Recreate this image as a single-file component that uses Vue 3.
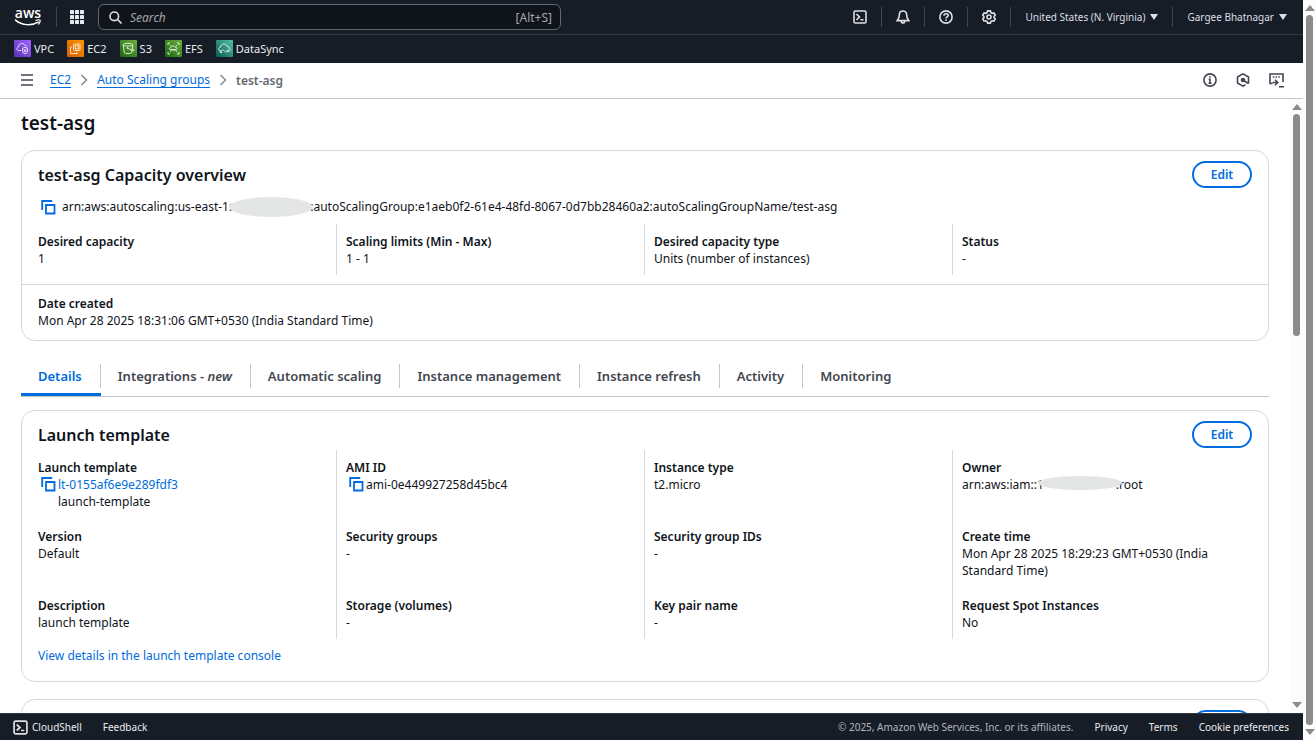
<script setup>
const services = [
  { name: 'VPC', kind: 'vpc' },
  { name: 'EC2', kind: 'ec2' },
  { name: 'S3', kind: 's3' },
  { name: 'EFS', kind: 'efs' },
  { name: 'DataSync', kind: 'sync' },
]
const capacity = [
  { label: 'Desired capacity', value: '1' },
  { label: 'Scaling limits (Min - Max)', value: '1 - 1' },
  { label: 'Desired capacity type', value: 'Units (number of instances)' },
  { label: 'Status', value: '-' },
]
const tabs = ['Details', 'Integrations - ', 'Automatic scaling', 'Instance management', 'Instance refresh', 'Activity', 'Monitoring']
const template = [
  [
    { label: 'Launch template', link: 'lt-0155af6e9e289fdf3', sub: 'launch-template' },
    { label: 'Version', value: 'Default' },
    { label: 'Description', value: 'launch template' },
  ],
  [
    { label: 'AMI ID', copy: 'ami-0e449927258d45bc4' },
    { label: 'Security groups', value: '-' },
    { label: 'Storage (volumes)', value: '-' },
  ],
  [
    { label: 'Instance type', value: 't2.micro' },
    { label: 'Security group IDs', value: '-' },
    { label: 'Key pair name', value: '-' },
  ],
  [
    { label: 'Owner', owner: true },
    { label: 'Create time', value: 'Mon Apr 28 2025 18:29:23 GMT+0530 (India Standard Time)' },
    { label: 'Request Spot Instances', value: 'No' },
  ],
]
</script>

<template>
  <div class="window">
    <div class="console">
      <header class="topbar">
        <a class="logo" href="#" aria-label="aws">
          <svg width="28" height="28" viewBox="0 0 28 28">
            <text x="14" y="15" text-anchor="middle" class="logo-text">aws</text>
            <path d="M1.5 17.1C8 22.7 18 22.9 24.2 19.1" fill="none" stroke="#fff" stroke-width="1.5" stroke-linecap="round" />
            <path d="M22 17.3c1.800-.5 3.600-.6 4-.1.4.6-.3 2.500-1.400 3.800" fill="none" stroke="#fff" stroke-width="1.200" stroke-linecap="round" />
          </svg>
        </a>
        <span class="rule"></span>
        <button class="icon-btn apps" aria-label="Services">
          <svg width="14" height="14" viewBox="0 0 14 14" fill="#e6e9ee">
            <template v-for="r in 3" :key="r">
              <rect v-for="c in 3" :key="c" :x="(c - 1) * 5" :y="(r - 1) * 5" width="4" height="4" rx="0.5" />
            </template>
          </svg>
        </button>
        <label class="search">
          <svg width="13" height="13" viewBox="0 0 13 13" fill="none" stroke="#dedee3" stroke-width="1.600">
            <circle cx="5.300" cy="5.300" r="4.300" /><path d="M8.500 8.500l4 4" />
          </svg>
          <input type="text" placeholder="Search" aria-label="Search" />
          <span>[Alt+S]</span>
        </label>
        <nav class="tools">
          <button class="icon-btn" aria-label="CloudShell">
            <svg class="line" width="14" height="14" viewBox="0 0 14 14"><rect x="1" y="1" width="12" height="12" rx="1.500" /><path d="M3.500 4.200l3 2.800-3 2.800M7.500 9.800h3" /></svg>
          </button>
          <span class="rule"></span>
          <button class="icon-btn" aria-label="Notifications">
            <svg class="line" width="14" height="14" viewBox="0 0 14 14"><path d="M7 1C4.800 1 3.400 2.500 3.400 4.500 3.400 7.500 2.900 8.500 1.300 10.600h11.400C11.100 8.500 10.600 7.500 10.600 4.500 10.600 2.500 9.200 1 7 1zM5.300 11c0 2.700 3.400 2.700 3.400 0" /></svg>
          </button>
          <span class="rule"></span>
          <button class="icon-btn" aria-label="Help">
            <svg class="line" width="14" height="14" viewBox="0 0 14 14"><circle cx="7" cy="7" r="6.100" /><path d="M5 5.700c0-2.600 4.200-2.400 4.200-.2C9.200 7 7 6.900 7 8.500M7 9.500v1.500" /></svg>
          </button>
          <span class="rule"></span>
          <button class="icon-btn" aria-label="Settings">
            <svg class="line" width="14" height="14" viewBox="0 0 14 14"><path d="M5.600.9h2.800l.5 1.700 1.300.7 1.700-.4 1.400 2.300-1.200 1.200v1.300l1.200 1.200-1.400 2.300-1.700-.4-1.300.7-.5 1.600H5.600l-.5-1.600-1.300-.7-1.700.4L.7 8.900l1.200-1.200V6.400L.7 5.200l1.400-2.300 1.700.4 1.300-.7z" /><circle cx="7" cy="7" r="2" /></svg>
          </button>
          <span class="rule"></span>
          <button class="menu">United States (N. Virginia)<i></i></button>
          <span class="rule"></span>
          <button class="menu">Gargee Bhatnagar<i></i></button>
        </nav>
      </header>

      <nav class="services">
        <a v-for="s in services" :key="s.name" href="#">
          <svg :class="['svc', s.kind]" width="17" height="17" viewBox="0 0 17 17">
            <g v-if="s.kind === 'vpc'">
              <path d="M7 10.500H4.700C2.300 10.300 2.300 7.300 4.500 7c0-3.800 5.200-4.800 6.300-1.500 1.300-.2 1.700.5 1.900 1.100" />
              <path d="M11 7.300l2.500 1v3c0 1.200-1 2-2.500 2.600-1.500-.6-2.500-1.400-2.500-2.600v-3zM10.300 9.300v2.800M11.800 9.300v2.800" />
            </g>
            <g v-else-if="s.kind === 'ec2'">
              <rect x="6.500" y="4" width="6.500" height="6.500" rx="1" /><path d="M4.800 7H3.500v6.500H10V12M8.200 5.700h3.200v3.200H8.200z" />
            </g>
            <g v-else-if="s.kind === 's3'">
              <ellipse cx="8" cy="4.700" rx="4.800" ry="1.400" /><path d="M3.200 4.700l1.100 8c1 1.200 6.400 1.200 7.400 0l1.100-8M7.500 8.200l5.500 2.500c1.500.5 1.300-1-.6-1.900" /><circle cx="7.400" cy="8" r=".5" />
            </g>
            <g v-else-if="s.kind === 'efs'">
              <path d="M3 5V3h2M12 3h2v2M14 12v2h-2M5 14H3v-2M5 5l1 1M12 5l-1 1M5 12l1-1M12 12l-1-1M5.500 9.800c-1.700-.3-1.200-2 .1-2C6 5.500 9.800 5.500 10.200 7.200c2.300-.1 2.400 2.400.8 2.600zM5.500 9.800h5.700" />
            </g>
            <g v-else>
              <path d="M5.500 10.700C2 11.500 1.800 7.600 4.400 7.300c.4-4.300 5.900-4.200 6.600-1.100 1.600-.2 2 .8 2 1.700 1.600.5 1.700 2.700.2 3.200M4.500 12.500c1-4 3.500-2 4.200-1.300 1.300 1.300 2.400.8 3.400-.7M10.700 10.400h1.700v1.600M4.300 10.800v1.800h1.800" />
            </g>
          </svg>
          <span>{{ s.name }}</span>
        </a>
      </nav>

      <div class="crumbs">
        <button class="icon-btn" aria-label="Open navigation">
          <svg class="dark" width="14" height="14" viewBox="0 0 14 14"><path d="M1 2h12M1 7h12M1 12h12" /></svg>
        </button>
        <nav class="trail">
          <a href="#">EC2</a>
          <svg class="chev" width="8" height="12" viewBox="0 0 8 12"><path d="M1.500 1l5 5-5 5" /></svg>
          <a href="#">Auto Scaling groups</a>
          <svg class="chev" width="8" height="12" viewBox="0 0 8 12"><path d="M1.500 1l5 5-5 5" /></svg>
          <span>test-asg</span>
        </nav>
        <div class="panels">
          <button class="icon-btn" aria-label="Info">
            <svg class="dark" width="14" height="14" viewBox="0 0 14 14"><circle cx="7" cy="7" r="6.100" /><path d="M7 3.200v1.600M5.700 6.300H7v3.900M5.500 10.300h3" /></svg>
          </button>
          <button class="icon-btn" aria-label="Diagnostics">
            <svg class="dark" width="14" height="14" viewBox="0 0 14 14"><path d="M12.500 10.600V4L7 .9 1.500 4v6L7 13.100l2.500-1.400" /><circle cx="7" cy="7" r="2.300" fill="#424650" stroke="none" /><path d="M7.500 7.500l5 3" /></svg>
          </button>
          <button class="icon-btn" aria-label="Console tools">
            <svg class="dark" width="15" height="15" viewBox="0 0 15 15"><path d="M3.500 10.500H1V1h13v8M3.800 4h1.500M6.600 4h1.500M9.400 4h1.500M3.500 9.500h5M6 6.700l2.800 2.800L6 12.300M10 13.800h5" /></svg>
          </button>
        </div>
      </div>

      <div class="body">
        <main>
          <h1>test-asg</h1>
          <section class="card">
            <div class="card-head"><h2>test-asg Capacity overview</h2><button class="edit">Edit</button></div>
            <p class="arn">
              <button class="copy" aria-label="Copy ARN"><svg width="15" height="15" viewBox="0 0 15 15"><path d="M1.200 10V1h10M5 5h8.500v8.500H5z" /></svg></button>
              <span>arn:aws:autoscaling:us-east-1:</span><span class="mask"></span><span>:autoScalingGroup:e1aeb0f2-61e4-48fd-8067-0d7bb28460a2:autoScalingGroupName/test-asg</span>
            </p>
            <div class="cols">
              <dl v-for="c in capacity" :key="c.label"><div><dt>{{ c.label }}</dt><dd>{{ c.value }}</dd></div></dl>
            </div>
            <dl class="created">
              <dt>Date created</dt>
              <dd>Mon Apr 28 2025 18:31:06 GMT+0530 (India Standard Time)</dd>
            </dl>
          </section>

          <div class="tabs" role="tablist">
            <button v-for="(t, i) in tabs" :key="t" role="tab" :aria-selected="i === 0" :class="{ active: i === 0 }"><span>{{ t }}<em v-if="i === 1">new</em></span></button>
          </div>

          <section class="card">
            <div class="card-head"><h2>Launch template</h2><button class="edit">Edit</button></div>
            <div class="cols tall">
              <dl v-for="(col, i) in template" :key="i">
                <div v-for="f in col" :key="f.label">
                  <dt>{{ f.label }}</dt>
                  <dd v-if="f.link || f.copy" class="copyable">
                    <button class="copy" aria-label="Copy"><svg width="15" height="15" viewBox="0 0 15 15"><path d="M1.200 10V1h10M5 5h8.500v8.500H5z" /></svg></button>
                    <span><a v-if="f.link" href="#">{{ f.link }}</a><template v-else>{{ f.copy }}</template><br v-if="f.sub" />{{ f.sub }}</span>
                  </dd>
                  <dd v-else-if="f.owner" class="owner"><span>arn:aws:iam::1</span><span class="mask small"></span><span>:root</span></dd>
                  <dd v-else>{{ f.value }}</dd>
                </div>
              </dl>
            </div>
            <p class="more"><a href="#">View details in the launch template console</a></p>
          </section>

          <section class="card next">
            <div class="card-head"><button class="edit" aria-label="Edit"></button></div>
          </section>
        </main>
        <div class="bar inner"><i class="up"></i><div class="track"><b></b></div><i class="down"></i></div>
      </div>

      <footer>
        <button class="shell">
          <svg class="line" width="15" height="15" viewBox="0 0 14 14"><rect x="1" y="1" width="12" height="12" rx="1.500" /><path d="M3.500 4.200l3 2.800-3 2.800M7.500 9.800h3" /></svg>
          CloudShell
        </button>
        <a href="#">Feedback</a>
        <span class="legal">© 2025, Amazon Web Services, Inc. or its affiliates.</span>
        <a href="#">Privacy</a>
        <a href="#">Terms</a>
        <a href="#">Cookie preferences</a>
      </footer>
    </div>
    <div class="bar outer"><i class="up"></i><div class="track"><b></b></div><i class="down"></i></div>
  </div>
</template>

<style>
html, body { background: #fff; overflow: hidden; }
</style>

<style scoped>
* { box-sizing: border-box; }
.window { display: flex; height: 100vh; font: 12px/17px "Noto Sans", "Open Sans", sans-serif; color: #0f141a; }
.console { flex: 1; min-width: 0; display: flex; flex-direction: column; }
button { font: inherit; color: inherit; background: none; border: 0; padding: 0; cursor: pointer; }
a { color: #006ce0; text-decoration: none; }
h1, h2, p, dl, dt, dd { margin: 0; }
svg { display: block; flex: none; }
.line { fill: none; stroke: #dedee3; stroke-width: 1.6; }
.dark { fill: none; stroke: #424650; stroke-width: 1.6; }
.icon-btn { display: flex; }

.topbar { height: 35px; flex: none; display: flex; align-items: center; background: #161d26; border-bottom: 1px solid #333843; padding: 0 16px 0 14px; color: #dedee3; }
.logo-text { font: 600 14px "Open Sans", sans-serif; fill: #fff; }
.rule { width: 1px; height: 20px; background: #424650; }
.logo { margin-right: 14px; }
.apps { margin: 0 14px 0 13px; }
.search { width: 463px; height: 26px; display: flex; align-items: center; gap: 8px; padding: 0 8px 0 10px; border: 1px solid #656871; border-radius: 6px; background: #0f141a; color: #a4a4ad; }
.search input { flex: 1; min-width: 0; border: 0; padding: 0; outline: 0; background: none; color: #dedee3; font: inherit; }
.search input::placeholder { color: #a4a4ad; font-style: italic; opacity: 1; }
.tools { margin-left: auto; display: flex; align-items: center; gap: 14px; font-size: 10px; }
.menu { display: flex; align-items: center; gap: 5px; }
.menu i { border: 4px solid transparent; border-top: 6px solid #dedee3; border-bottom: 0; }

.services { height: 28px; flex: none; display: flex; align-items: center; gap: 13px; padding: 0 0 2px 14px; background: #161d26; font-size: 11px; }
.services a { display: flex; align-items: center; gap: 3px; color: #ebebf0; }
.svc { fill: none; stroke: #fff; stroke-width: 0.8; border-radius: 1px; }
.vpc { background: linear-gradient(45deg, #5a30b5, #a166ff); }
.ec2 { background: linear-gradient(45deg, #d45b07, #ff9900); }
.s3, .efs { background: linear-gradient(45deg, #1b660f, #6cae3e); }
.sync { background: linear-gradient(45deg, #055f4e, #56c0a7); }

.crumbs { height: 36px; flex: none; display: flex; align-items: center; padding: 0 19px 1px 20px; border-bottom: 1px solid #c6c6cd; }
.trail { display: flex; align-items: center; gap: 9px; margin-left: 16px; color: #656871; font-weight: 600; }
.trail a { border-bottom: 1px solid #006ce0; line-height: 15px; font-weight: 400; }
.chev { fill: none; stroke: #8c8c94; stroke-width: 1.6; }
.panels { margin-left: auto; display: flex; gap: 19px; }

.body { flex: 1; min-height: 0; display: flex; }
main { flex: 1; min-width: 0; overflow: hidden; padding: 11px 21px 0; }
h1 { font-size: 19px; line-height: 26px; margin-bottom: 14px; font-weight: 600; }
h2 { font-size: 16px; line-height: 22px; font-weight: 600; }
.card { border: 1px solid #d5d8dc; border-radius: 14px; padding: 10px 16px 17px; overflow: hidden; margin-bottom: 17px; }
.card-head { display: flex; justify-content: space-between; align-items: center; }
.edit { height: 27px; width: 60px; border: 2px solid #006ce0; border-radius: 14px; color: #006ce0; font-weight: 600; line-height: 22px; }
.arn { display: flex; align-items: center; margin-top: 10px; }
.copy { display: flex; margin: 1px 2px 0 3px; }
.copy svg { fill: none; stroke: #006ce0; stroke-width: 1.8; }
.arn .copy { margin-right: 6px; }
.mask { position: relative; width: 84px; height: 20px; margin: -2px -3px; border-radius: 50%; background: #e4e5e5; }
.mask.small { width: 84px; height: 14px; margin: 0 -6px; }
.owner { display: flex; }
.cols { display: grid; grid-template-columns: repeat(4, 1fr); gap: 18px; margin-top: 9px; }
.cols dl { padding: 9px 0 8px; display: flex; flex-direction: column; gap: 17px; }
.cols dl + dl { margin-left: -10px; border-left: 1px solid #d5d8dc; padding-left: 9px; }
.tall { margin-top: 2px; }
.tall dl > div { min-height: 52px; }
.tall dl > div:last-child { min-height: 34px; }
dt { font-weight: 600; }
.copyable { display: flex; align-items: flex-start; }
.created { margin: 9px -16px -17px; padding: 10px 16px 11px; border-top: 1px solid #d5d8dc; }
.more { margin-top: 8px; }
.next .card-head { justify-content: flex-end; }

.tabs { display: flex; border-bottom: 1px solid #c6c6cd; margin-bottom: 13px; font-size: 13px; font-weight: 600; color: #424650; }
.tabs button { padding: 6px 0 5px; border-bottom: 3px solid transparent; }
.tabs button span { display: block; padding: 4px 18px 3px 17px; border-right: 1px solid #c6c6cd; }
.tabs button:last-child span { border: 0; }
.tabs .active { color: #006ce0; border-color: #006ce0; }

footer { height: 27px; flex: none; display: flex; align-items: center; gap: 21px; padding: 0 14px 0 13px; background: #161d26; border-top: 1px solid #333843; color: #ebebf0; font-size: 10px; }
footer a { color: #ebebf0; }
.shell { display: flex; align-items: center; gap: 4px; }
.legal { margin-left: auto; color: #b4b4bb; }

.bar { width: 13px; flex: none; display: flex; flex-direction: column; align-items: center; background: #fcfcfc; padding: 5px 0; gap: 4px; }
.bar i { border: 5px solid transparent; }
.up { border-top: 0 !important; border-bottom: 6px solid #8b8b8b !important; }
.down { border-bottom: 0 !important; border-top: 6px solid #8b8b8b !important; }
.track { flex: 1; }
.track b { display: block; width: 7px; height: 100%; border-radius: 4px; background: #8b8b8b; }
.inner .track b { height: 38%; }
</style>
